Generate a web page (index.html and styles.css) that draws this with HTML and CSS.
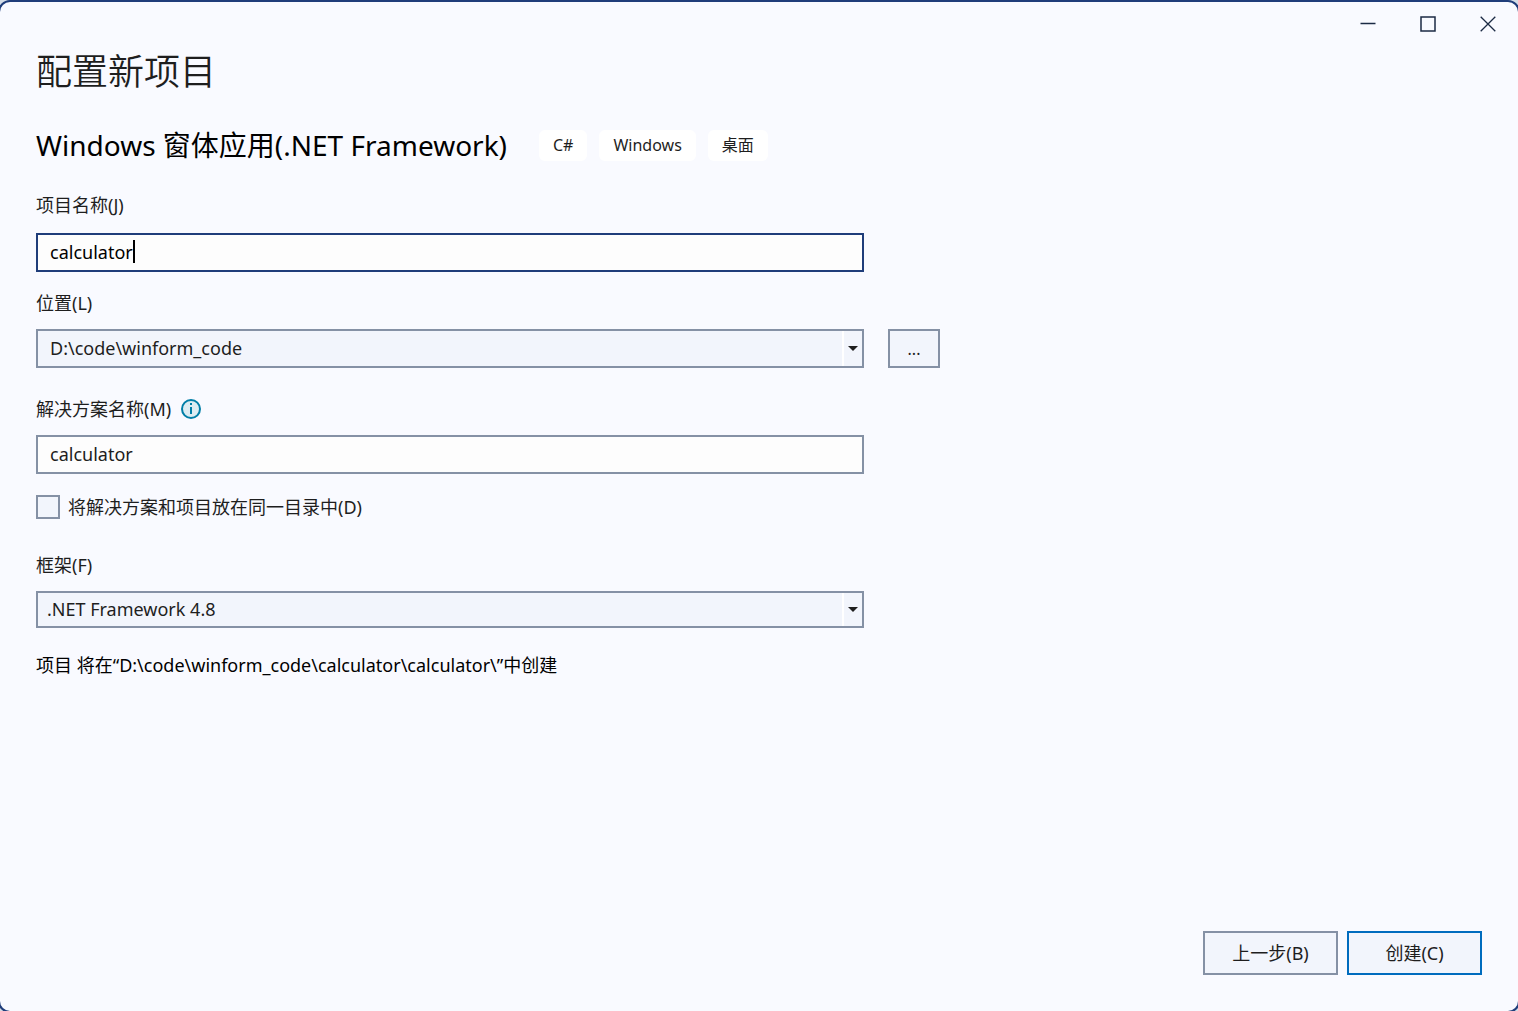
FILE: index.html
```html
<!DOCTYPE html>
<html lang="zh-CN">
<head>
    <meta charset="UTF-8">
    <meta name="viewport" content="width=device-width, initial-scale=1.0">
    <title>配置新项目</title>
    <link rel="stylesheet" href="styles.css">
</head>
<body>
    <div class="window">
        <header class="title-bar">
            <button type="button" class="window-btn" aria-label="最小化">
                <svg width="16" height="16" viewBox="0 0 16 16" fill="none" stroke="currentColor" stroke-width="1.5">
                    <path d="M0.5 7.5H15.5"/>
                </svg>
            </button>
            <button type="button" class="window-btn" aria-label="最大化">
                <svg width="16" height="16" viewBox="0 0 16 16" fill="none" stroke="currentColor" stroke-width="1.5">
                    <rect x="1" y="1" width="14" height="14"/>
                </svg>
            </button>
            <button type="button" class="window-btn" aria-label="关闭">
                <svg width="16" height="16" viewBox="0 0 16 16" fill="none" stroke="currentColor" stroke-width="1.3">
                    <path d="M0.7 0.7L15.3 15.3M15.3 0.7L0.7 15.3"/>
                </svg>
            </button>
        </header>

        <form class="project-form">
            <main class="content">
                <h1>配置新项目</h1>

                <div class="template-header">
                    <h2>Windows 窗体应用(.NET Framework)</h2>
                    <ul class="tags">
                        <li>C#</li>
                        <li>Windows</li>
                        <li>桌面</li>
                    </ul>
                </div>

                <div class="form-group name-group">
                    <label for="projectName">项目名称(J)</label>
                    <div class="field active">
                        <input type="text" id="projectName" name="projectName" value="calculator">
                        <span class="caret"></span>
                    </div>
                </div>

                <div class="form-group">
                    <label for="location">位置(L)</label>
                    <div class="field-row">
                        <div class="field select-field">
                            <select id="location" name="location">
                                <option>D:\code\winform_code</option>
                            </select>
                            <span class="arrow"></span>
                        </div>
                        <button type="button" class="btn browse-btn">...</button>
                    </div>
                </div>

                <div class="form-group solution-group">
                    <div class="label-row">
                        <label for="solutionName">解决方案名称(M)</label>
                        <svg class="info-icon" width="20" height="20" viewBox="0 0 20 20">
                            <circle cx="10" cy="10" r="9" fill="#dcecf2" stroke="#007ea7" stroke-width="2"/>
                            <rect x="9" y="4" width="2" height="2" fill="#007ea7"/>
                            <rect x="9" y="8" width="2" height="7" fill="#007ea7"/>
                        </svg>
                    </div>
                    <div class="field">
                        <input type="text" id="solutionName" name="solutionName" value="calculator">
                    </div>
                </div>

                <div class="checkbox-group">
                    <input type="checkbox" id="sameDirectory" name="sameDirectory">
                    <label for="sameDirectory">将解决方案和项目放在同一目录中(D)</label>
                </div>

                <div class="form-group framework-group">
                    <label for="framework">框架(F)</label>
                    <div class="field select-field">
                        <select id="framework" name="framework">
                            <option>.NET Framework 4.8</option>
                        </select>
                        <span class="arrow"></span>
                    </div>
                </div>

                <p class="summary">项目 将在“D:\code\winform_code\calculator\calculator\”中创建</p>
            </main>

            <footer class="actions">
                <button type="button" class="btn">上一步(B)</button>
                <button type="submit" class="btn primary">创建(C)</button>
            </footer>
        </form>
    </div>
</body>
</html>
```

FILE: styles.css
```css
* {
    margin: 0;
    padding: 0;
    box-sizing: border-box;
    font-family: "Noto Sans", "Noto Sans CJK SC", sans-serif;
}

body {
    height: 100vh;
    overflow: hidden;
    display: flex;
    background: #d3dce6;
    color: #1e1e1e;
    font-size: 18px;
    line-height: 24px;
}

/* The side and bottom borders run off screen, only the corners show */
.window {
    flex: 1;
    display: flex;
    flex-direction: column;
    margin: 0 -2px -2px;
    border: 2px solid #1f3d7a;
    border-radius: 12px;
    background: #f9faff;
}

.title-bar {
    display: flex;
    justify-content: flex-end;
}

.window-btn {
    display: flex;
    align-items: center;
    justify-content: center;
    width: 60px;
    height: 44px;
    border: none;
    background: none;
    color: #1b2a44;
}

.project-form {
    flex: 1;
    display: flex;
    flex-direction: column;
    justify-content: space-between;
    padding: 0 36px 36px;
}

h1 {
    font-size: 36px;
    font-weight: 350;
    line-height: 52px;
}

.template-header {
    display: flex;
    align-items: center;
    gap: 32px;
    margin: 32px 0;
}

h2 {
    color: #000;
    font-size: 28px;
    font-weight: 400;
    line-height: 31px;
}

.tags {
    display: flex;
    gap: 12px;
    list-style: none;
}

.tags li {
    padding: 0 14px;
    border-radius: 6px;
    background: #fff;
    font-size: 16px;
    line-height: 31px;
}

.form-group {
    display: flex;
    flex-direction: column;
    gap: 14px;
    margin-bottom: 19px;
}

.name-group {
    gap: 16px;
}

.label-row {
    display: flex;
    align-items: center;
    gap: 10px;
}

.field-row {
    display: flex;
    gap: 24px;
}

.field {
    position: relative;
    width: 100%;
    max-width: 828px;
}

.field input,
.field select {
    display: block;
    width: 100%;
    height: 39px;
    padding: 0 12px 2px;
    border: 2px solid #8591a5;
    border-radius: 0;
    background: #fdfdfd;
    color: #1e1e1e;
    font-size: 18px;
    outline: none;
}

.field select {
    appearance: none;
    background: #f2f5fc;
}

.field.active input {
    border-color: #1f3d7a;
    color: #000;
}

.caret {
    position: absolute;
    top: 7px;
    left: 97px;
    width: 2px;
    height: 23px;
    background: #000;
}

/* Drop-down part of the combo boxes */
.arrow {
    position: absolute;
    top: 2px;
    right: 2px;
    bottom: 2px;
    display: flex;
    align-items: center;
    justify-content: center;
    width: 20px;
    border-left: 2px solid #fff;
    pointer-events: none;
}

.arrow::before {
    content: '';
    border: 5px solid transparent;
    border-top-color: #1e1e1e;
    border-bottom: none;
}

.solution-group {
    margin: 29px 0 21px;
}

.checkbox-group {
    display: flex;
    align-items: center;
    gap: 8px;
}

.checkbox-group input {
    appearance: none;
    width: 24px;
    height: 24px;
    border: 2px solid #8591a5;
    background: #f2f5fc;
}

.framework-group {
    margin: 34px 0 25px;
}

.framework-group select {
    height: 37px;
    padding-left: 9px;
}

.summary {
    color: #000;
}

.btn {
    width: 135px;
    height: 44px;
    padding-bottom: 2px;
    border: 2px solid #8591a5;
    background: #f2f5fc;
    color: #1e1e1e;
    font-size: 18px;
}

.browse-btn {
    width: 52px;
    height: 39px;
    padding: 0;
    font-size: 16px;
}

.btn.primary {
    border-color: #006cbe;
}

.actions {
    display: flex;
    justify-content: flex-end;
    gap: 9px;
}
```
